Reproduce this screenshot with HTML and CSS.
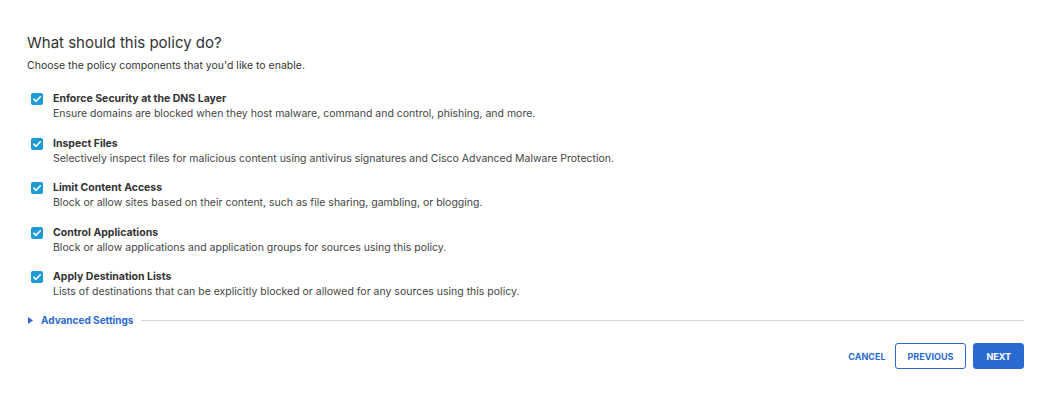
FILE: index.html
```html
<!DOCTYPE html>
<html>
<head>
<meta charset="utf-8">
<link rel="stylesheet" href="styles.css">
</head>
<body>
<div class="page">
  <h1 class="title">What should this policy do?</h1>
  <p class="subtitle">Choose the policy components that you'd like to enable.</p>
  <ul class="options">
    <li class="option">
      <span class="check"><svg viewBox="0 0 12 12" width="12" height="12"><path d="M2.8 6.2 L5 8.3 L9.3 3.8" fill="none" stroke="#fff" stroke-width="1.6" stroke-linecap="round" stroke-linejoin="round"/></svg></span>
      <div class="option-text">
        <div class="option-name">Enforce Security at the DNS Layer</div>
        <div class="option-desc">Ensure domains are blocked when they host malware, command and control, phishing, and more.</div>
      </div>
    </li>
    <li class="option">
      <span class="check"><svg viewBox="0 0 12 12" width="12" height="12"><path d="M2.8 6.2 L5 8.3 L9.3 3.8" fill="none" stroke="#fff" stroke-width="1.6" stroke-linecap="round" stroke-linejoin="round"/></svg></span>
      <div class="option-text">
        <div class="option-name">Inspect Files</div>
        <div class="option-desc">Selectively inspect files for malicious content using antivirus signatures and Cisco Advanced Malware Protection.</div>
      </div>
    </li>
    <li class="option">
      <span class="check"><svg viewBox="0 0 12 12" width="12" height="12"><path d="M2.8 6.2 L5 8.3 L9.3 3.8" fill="none" stroke="#fff" stroke-width="1.6" stroke-linecap="round" stroke-linejoin="round"/></svg></span>
      <div class="option-text">
        <div class="option-name">Limit Content Access</div>
        <div class="option-desc">Block or allow sites based on their content, such as file sharing, gambling, or blogging.</div>
      </div>
    </li>
    <li class="option">
      <span class="check"><svg viewBox="0 0 12 12" width="12" height="12"><path d="M2.8 6.2 L5 8.3 L9.3 3.8" fill="none" stroke="#fff" stroke-width="1.6" stroke-linecap="round" stroke-linejoin="round"/></svg></span>
      <div class="option-text">
        <div class="option-name">Control Applications</div>
        <div class="option-desc">Block or allow applications and application groups for sources using this policy.</div>
      </div>
    </li>
    <li class="option">
      <span class="check"><svg viewBox="0 0 12 12" width="12" height="12"><path d="M2.8 6.2 L5 8.3 L9.3 3.8" fill="none" stroke="#fff" stroke-width="1.6" stroke-linecap="round" stroke-linejoin="round"/></svg></span>
      <div class="option-text">
        <div class="option-name">Apply Destination Lists</div>
        <div class="option-desc">Lists of destinations that can be explicitly blocked or allowed for any sources using this policy.</div>
      </div>
    </li>
  </ul>
  <div class="advanced">
    <svg class="caret" viewBox="0 0 5 7" width="5" height="7"><path d="M0 0 L5 3.5 L0 7 Z" fill="#2b6bd1"/></svg>
    <span class="advanced-label">Advanced Settings</span>
    <span class="rule"></span>
  </div>
  <div class="actions">
    <button class="btn btn-link">CANCEL</button>
    <button class="btn btn-outline">PREVIOUS</button>
    <button class="btn btn-primary">NEXT</button>
  </div>
</div>
</body>
</html>
```
FILE: styles.css
```css
* { box-sizing: border-box; }
html, body { margin: 0; background: #fff; }
body { font-family: Inter, "Noto Sans", sans-serif; color: #333; }
.page { padding: 33px 30px 0 27px; }
.title { margin: 0; font-size: 15px; font-weight: 400; line-height: 20px; color: #333; letter-spacing: 0; }
.subtitle { margin: 6px 0 0; font-size: 10.5px; line-height: 14px; color: #333; }
.options { list-style: none; margin: 19px 0 0; padding: 0 0 0 4px; display: flex; flex-direction: column; gap: 15.5px; }
.option { display: flex; gap: 10px; align-items: flex-start; }
.check { width: 12px; height: 12px; border-radius: 2px; background: #1e9bd7; display: flex; align-items: center; justify-content: center; margin-top: 1px; flex-shrink: 0; }
.check svg { display: block; }
.option-text { display: flex; flex-direction: column; gap: 1px; }
.option-name { font-size: 10.5px; font-weight: 700; line-height: 14px; color: #333; }
.option-desc { font-size: 10.5px; line-height: 14px; color: #444; }
.advanced { display: flex; align-items: center; margin-top: 14px; height: 14px; padding-left: 1px; }
.caret { display: block; flex-shrink: 0; }
.advanced-label { margin-left: 8px; font-size: 10px; font-weight: 700; color: #2b6bd1; }
.rule { flex: 1; height: 1px; background: #d6d6d6; margin-left: 8px; }
.actions { display: flex; justify-content: flex-end; align-items: center; gap: 7px; margin-top: 16px; }
.btn { font-family: Inter, "Noto Sans", sans-serif; font-size: 9px; font-weight: 700; height: 26px; border-radius: 3px; cursor: pointer; letter-spacing: 0; }
.btn-link { background: none; border: none; color: #2b6bd1; padding: 0 1px; margin-right: 1px; }
.btn-outline { background: #fff; border: 1px solid #2b6bd1; color: #2b6bd1; padding: 0 12px; }
.btn-primary { background: #2b6bd1; border: 1px solid #2b6bd1; color: #fff; padding: 0 12px; }
```
